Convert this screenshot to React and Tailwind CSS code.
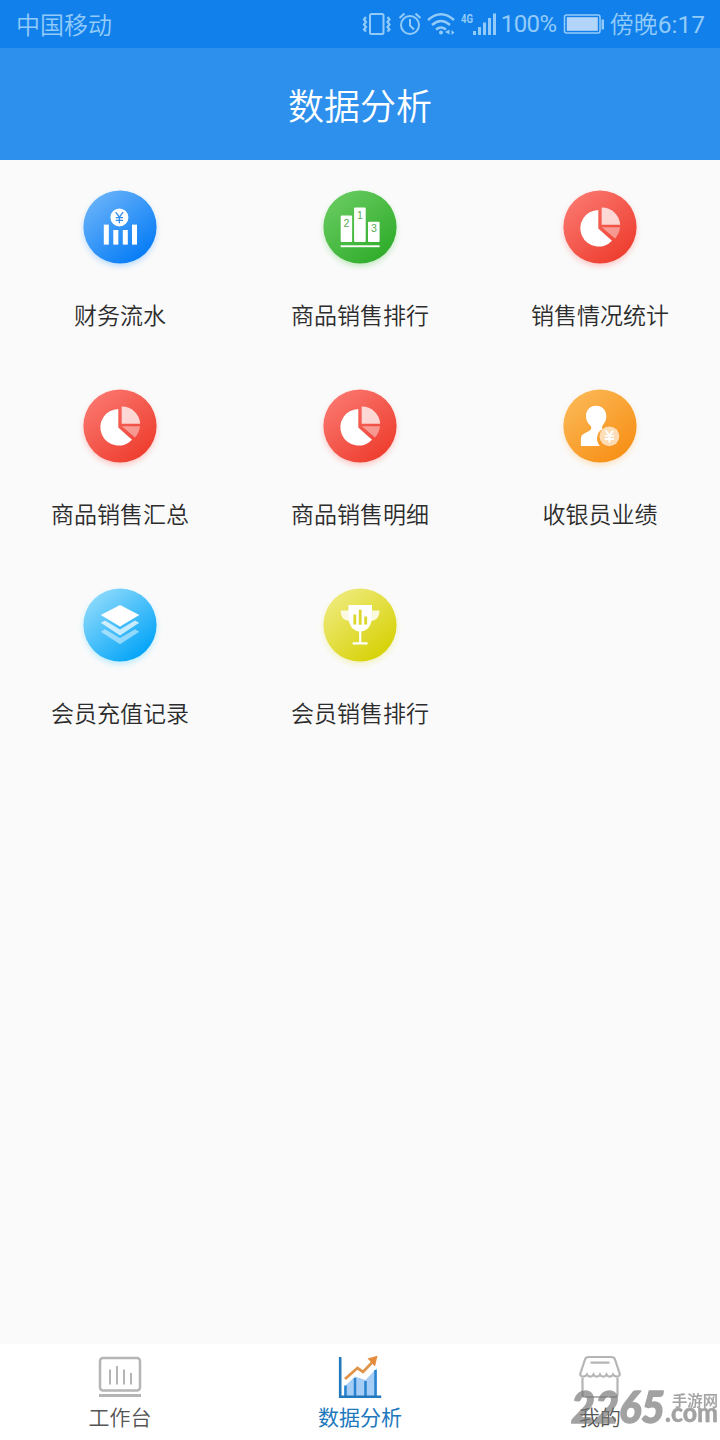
import React, { useState } from 'react';

const PieArt = () => (
  <>
    <path d="M-1.7 -17v18.6L12 13.8A18.3 18.3 0 1 1 -1.7 -17Z" fill="#fff" />
    <path d="M1.7 -19.6A18.4 18.4 0 0 1 20.2 -2.2H1.7Z" fill="#fff" opacity=".76" />
    <path d="M1.9 0.3H20A20 20 0 0 1 15 11.6Z" fill="#fff" opacity=".42" />
  </>
);

const FinanceArt = () => (
  <>
    <g fill="#fff">
      <circle cx="-.6" cy="-9.6" r="9" />
      <rect x="-16.2" y="-2.4" width="5" height="20" />
      <rect x="-6.7" y="3" width="5" height="14.6" />
      <rect x="2.8" y="3" width="5" height="14.6" />
      <rect x="12" y="-2.4" width="5" height="20" />
    </g>
    <path d="M-4.3 -14.8l3.7 5 3.7 -5M-.6 -9.8v6M-4.2 -9.4h7.2M-4.2 -6.6h7.2" fill="none" stroke="#2f8cf0" strokeWidth="1.3" />
  </>
);

const RankArt = () => (
  <>
    <g fill="#fff">
      <rect x="-19.3" y="-11.4" width="11.4" height="26.4" rx="1" />
      <rect x="-5.9" y="-19.4" width="11.6" height="34.4" rx="1" />
      <rect x="8" y="-5.2" width="11.6" height="20.2" rx="1" />
      <rect x="-19.3" y="18.3" width="38.9" height="1.9" />
    </g>
    <g fill="#55aa50" fontSize="10.5" textAnchor="middle" fontFamily="Liberation Sans, sans-serif">
      <text x="-13.6" y="-.4">2</text>
      <text x="0" y="-8">1</text>
      <text x="13.9" y="5.4">3</text>
    </g>
  </>
);

const CashierArt = () => (
  <>
    <path
      d="M-4 -20.3c-6.2 0 -10 4.5 -10 10.2 0 4 1.7 7.5 4.4 9.6 1.5 1.5 1 3.6 -.3 4.8l-6.2 3.4c-2.4 1.2 -3 3 -3 5.8v6.5H-.2C-3 16.5 -3.7 12.5 -2.3 8.8C-.9 4.7 1.2 4 2.4 3.2c-.8 -2 -.2 -3.3 1 -5C5.3 -3.9 6.3 -6.7 6.3 -10.1 6.3 -15.9 2.3 -20.3 -4 -20.3Z"
      fill="#fff"
    />
    <circle cx="9.4" cy="10.3" r="9.9" fill="#fff" opacity=".66" />
    <path d="M5.7 4.6l3.7 5 3.7 -5M9.4 9.6v7M4.8 9.8h9.2M4.8 13h9.2" fill="none" stroke="#fff" strokeWidth="1.8" />
  </>
);

const LayersArt = () => (
  <g fill="#fff">
    <path d="M0 -20L19.3 -9.9 0 1.4-19.2 -9.9Z" />
    <path d="M-19.2 -2.2l4.2 -2.2L0 4.5 15 -4.4l4.2 2.2L0 10.4Z" opacity=".72" />
    <path d="M-19.2 6.7l4.2 -2.4L0 13 15 4.3l4.2 2.4L0 19.2Z" opacity=".48" />
  </g>
);

const TrophyArt = () => (
  <>
    <path d="M-11 -14.6h-8.3c0 6.2 3 10.2 8.8 10.4V-9.5M11.5 -14.6h8c0 6.2 -3 10.2 -8.5 10.4V-9.5" fill="#fff" opacity=".82" />
    <path d="M-11.6 -20H12v11C12 0 7.6 6.5 .2 6.5S-11.6 0 -11.6 -9Z" fill="#fff" />
    <path d="M-.9 4h2.2v13.2h6.3v2.2H-7.3v-2.2h6.4Z" fill="#fff" />
    <path d="M-5.2 -10.5v10M.2 -15.3v15M5.7 -8.5v8" stroke="#dcd82b" strokeWidth="2.8" />
  </>
);

const menus = [
  { label: '财务流水', art: FinanceArt, from: '#66b1f9', to: '#087df6', glow: '#4ba4ff' },
  { label: '商品销售排行', art: RankArt, from: '#66ca5e', to: '#31ad2c', glow: '#5cc759' },
  { label: '销售情况统计', art: PieArt, from: '#fa756d', to: '#ee3f30', glow: '#f96f68' },
  { label: '商品销售汇总', art: PieArt, from: '#fa756d', to: '#ee3f30', glow: '#f96f68' },
  { label: '商品销售明细', art: PieArt, from: '#fa756d', to: '#ee3f30', glow: '#f96f68' },
  { label: '收银员业绩', art: CashierArt, from: '#fbb653', to: '#f79118', glow: '#fdb85e' },
  { label: '会员充值记录', art: LayersArt, from: '#8bd9fb', to: '#06a5f8', glow: '#4ed0ff' },
  { label: '会员销售排行', art: TrophyArt, from: '#eeea79', to: '#d7d208', glow: '#e6e35b' },
];

const MenuItem = ({ item, index }) => {
  const Art = item.art;
  return (
    <button className="flex h-[199px] flex-col items-center pt-[17px]">
      <svg className="h-[100px] w-[100px]" viewBox="-50 -50 100 100">
        <defs>
          <linearGradient id={`disc${index}`} x1="0.15" y1="0.1" x2="0.8" y2="0.9">
            <stop offset="0" stopColor={item.from} />
            <stop offset="1" stopColor={item.to} />
          </linearGradient>
          <filter id={`glow${index}`} x="-30%" y="-30%" width="160%" height="160%">
            <feGaussianBlur stdDeviation="3" />
          </filter>
        </defs>
        <circle cx="0" cy="3" r="36" fill={item.glow} opacity=".4" filter={`url(#glow${index})`} />
        <circle cx="0" cy="0" r="36.6" fill={`url(#disc${index})`} />
        <Art />
      </svg>
      <span className="mt-[20px] text-[23px] leading-[34px] font-[350] text-[#2c2c2c]">{item.label}</span>
    </button>
  );
};

const StatusBar = () => (
  <div className="flex h-12 items-center bg-[#1180eb] pr-[15px] pl-4 text-[#92cbf9]">
    <span className="text-[24px] leading-none font-[350]">中国移动</span>
    <svg className="ml-auto h-[48px] w-[138px]" viewBox="362 0 138 48" fill="none" stroke="currentColor" strokeWidth="2">
      <rect x="370" y="14" width="13.5" height="20" rx="1.5" />
      <path d="M366 17l-2 2.5 2 2.5 -2 2.5 2 2.5 -2 2.5 2 2M387.5 17l2 2.5 -2 2.5 2 2.5 -2 2.5 2 2.5 -2 2" strokeWidth="2.2" />
      <circle cx="410" cy="25" r="9" />
      <path d="M410 19v6.5l4 4M399.5 18l5 -4.5M420.5 18l-5 -4.5" />
      <path d="M428 20q13 -11.5 26 0M432 25q9 -8 18 0M436 29.500q5 -4 10 0" strokeWidth="2.4" />
      <circle cx="441" cy="32.5" r="2" fill="currentColor" stroke="none" />
      <path d="M449.5 29.5v5l-4.5 -2.5ZM451.5 30l3 2.5 -3 2.5Z" fill="currentColor" stroke="none" />
      <text x="461" y="22.500" fontSize="13" textLength="12" lengthAdjust="spacingAndGlyphs" fontFamily="Roboto, sans-serif" fontWeight="700" fill="currentColor" stroke="none">4G</text>
      <path d="M474.5 31v4M479.5 27v8M484.5 22.5v12.5M489.5 18v17M494.5 13.5v21.5" strokeWidth="3" />
    </svg>
    <span className="ml-[1px] w-[59px] font-[Roboto] text-[24px] leading-none tracking-[-0.6px]">100%</span>
    <svg className="ml-[3px] h-[24px] w-[43px]" viewBox="0 0 43 24" fill="currentColor">
      <rect x="1.5" y="3" width="35.5" height="18" rx="2" fill="none" stroke="currentColor" strokeWidth="1.5" />
      <rect x="3.8" y="5.2" width="31" height="13.6" fill="#b3d5fa" />
      <rect x="38.5" y="7.5" width="2.5" height="10" />
    </svg>
    <span className="ml-[4px] text-[24px] leading-none font-[350] whitespace-nowrap">
      傍晚<span className="font-[Roboto] text-[24.5px] font-normal">6:17</span>
    </span>
  </div>
);

const WorkIcon = () => (
  <svg className="h-[44px] w-[44px]" viewBox="98 1355 44 44" fill="none" stroke="#b5b5b5" strokeWidth="2.5">
    <rect x="100" y="1358" width="40" height="32.5" rx="3" />
    <path d="M99 1395.5h42" strokeWidth="2.8" />
    <path d="M110 1369.5v15M117 1366v18.5M124 1369.5v15M131 1373v11.5" strokeWidth="2" />
  </svg>
);

const ChartIcon = () => (
  <svg className="h-[44px] w-[44px]" viewBox="338 1355 44 44" fill="none">
    <path d="M344 1387l11 -10.5 10.5 3.5 11.5 -12v28.5h-33Z" fill="#a6cdf5" />
    <path d="M345.5 1385.5v10.5M355 1378v18M365.5 1381v15M375.5 1370v26" stroke="#2983cf" strokeWidth="2.5" />
    <path d="M340.2 1357v39.7h41" stroke="#2178bd" strokeWidth="2.6" />
    <path d="M345 1379l12.5 -11 5.5 4 10 -10.5" stroke="#e0954d" strokeWidth="2.8" />
    <path d="M377.5 1355.8l-10 2.7 7.5 8Z" fill="#e58c3c" />
  </svg>
);

const ShopIcon = () => (
  <svg className="h-[44px] w-[44px]" viewBox="578 1355 44 44" fill="none" stroke="#b5b5b5" strokeWidth="2.2">
    <path d="M580 1374.5l5 -15q.8 -2.5 3.500 -2.500h23q2.700 0 3.500 2.500l5 15" />
    <path d="M580 1374c1 3.500 5 3.500 7 .4 1.500 3 5 3 6.500 0 1.500 3 5 3 6.500 0 1.500 3 5 3 6.500 0 1.500 3 5 3 6.500 0 2 3.100 6 3.100 7 -.4" />
    <path d="M590.5 1362.7h19M582.5 1378v16.5q0 2.500 2.500 2.500h30q2.500 0 2.500 -2.500v-16.5" />
  </svg>
);

const tabs = [
  { key: 'work', label: '工作台', icon: WorkIcon },
  { key: 'data', label: '数据分析', icon: ChartIcon },
  { key: 'mine', label: '我的', icon: ShopIcon },
];

const Watermark = () => (
  <svg className="pointer-events-none absolute right-0 bottom-0 h-[60px] w-[154px]" viewBox="566 1380 154 60" fill="#777" stroke="#777" strokeLinejoin="round" opacity=".68">
    <text x="571" y="1422.5" fontSize="43.5" fontWeight="900" fontStyle="italic" textLength="94" lengthAdjust="spacingAndGlyphs" fontFamily="Lato, sans-serif" strokeWidth="1.4">2265</text>
    <text x="665" y="1422" fontSize="27" fontWeight="900" textLength="53" lengthAdjust="spacingAndGlyphs" fontFamily="Lato, sans-serif" strokeWidth=".4">.com</text>
    <text x="672" y="1405.500" fontSize="15.3" fontWeight="500" textLength="46" fontFamily="Noto Sans CJK SC, sans-serif" strokeWidth=".2">手游网</text>
  </svg>
);

const App = () => {
  const [active, setActive] = useState('data');

  return (
    <div className="relative flex h-[1440px] w-[720px] flex-col overflow-hidden bg-[#fafafa] font-['Noto_Sans_CJK_SC',sans-serif]">
      <StatusBar />
      <header className="flex h-28 items-center justify-center bg-[#2e90ed]">
        <h1 className="text-[36px] leading-none font-[350] text-white">数据分析</h1>
      </header>
      <main className="grid flex-1 grid-cols-3 content-start">
        {menus.map((item, index) => (
          <MenuItem key={item.label} item={item} index={index} />
        ))}
      </main>
      <nav className="grid h-24 grid-cols-3 bg-white">
        {tabs.map((tab) => {
          const Icon = tab.icon;
          return (
            <button key={tab.key} onClick={() => setActive(tab.key)} className="flex flex-col items-center pt-[11px]">
              <Icon />
              <span className={active === tab.key ? 'mt-[2px] text-[21px] leading-[30px] text-[#2178bd]' : 'mt-[2px] text-[21px] leading-[30px] font-[350] text-[#555]'}>
                {tab.label}
              </span>
            </button>
          );
        })}
      </nav>
      <Watermark />
    </div>
  );
};

export default App;
